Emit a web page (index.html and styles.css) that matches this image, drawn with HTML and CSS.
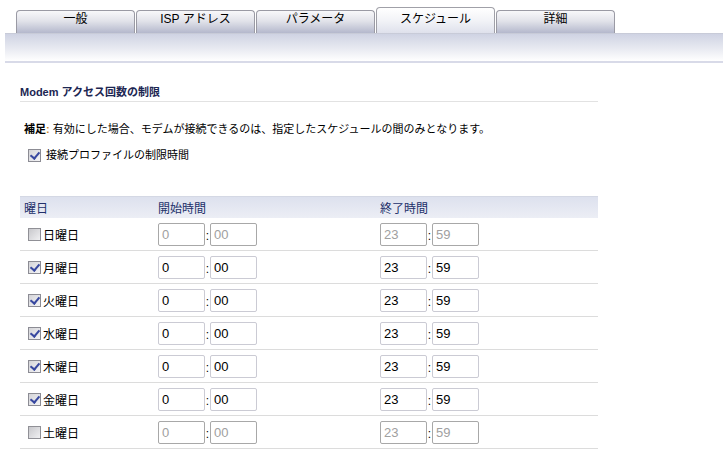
FILE: index.html
```html
<!DOCTYPE html>
<html lang="ja">
<head>
<meta charset="utf-8">
<link rel="stylesheet" href="styles.css">
</head>
<body>
<div class="tabs">
  <div class="tab">一般</div>
  <div class="tab">ISP アドレス</div>
  <div class="tab">パラメータ</div>
  <div class="tab active">スケジュール</div>
  <div class="tab">詳細</div>
</div>
<div class="bar"></div>
<div class="content">
  <h2 class="title">Modem アクセス回数の制限</h2>
  <p class="note"><b>補足<span class="colon">:</span></b> 有効にした場合、モデムが接続できるのは、指定したスケジュールの間のみとなります。</p>
  <label class="opt"><span class="cb on"></span>接続プロファイルの制限時間</label>

  <div class="table">
    <div class="row head">
      <div>曜日</div><div>開始時間</div><div>終了時間</div>
    </div>
    <div class="row off">
      <div class="day"><span class="cb"></span>日曜日</div>
      <div class="time"><span class="inp">0</span><span class="sep">:</span><span class="inp">00</span></div>
      <div class="time"><span class="inp">23</span><span class="sep">:</span><span class="inp">59</span></div>
    </div>
    <div class="row">
      <div class="day"><span class="cb on"></span>月曜日</div>
      <div class="time"><span class="inp">0</span><span class="sep">:</span><span class="inp">00</span></div>
      <div class="time"><span class="inp">23</span><span class="sep">:</span><span class="inp">59</span></div>
    </div>
    <div class="row">
      <div class="day"><span class="cb on"></span>火曜日</div>
      <div class="time"><span class="inp">0</span><span class="sep">:</span><span class="inp">00</span></div>
      <div class="time"><span class="inp">23</span><span class="sep">:</span><span class="inp">59</span></div>
    </div>
    <div class="row">
      <div class="day"><span class="cb on"></span>水曜日</div>
      <div class="time"><span class="inp">0</span><span class="sep">:</span><span class="inp">00</span></div>
      <div class="time"><span class="inp">23</span><span class="sep">:</span><span class="inp">59</span></div>
    </div>
    <div class="row">
      <div class="day"><span class="cb on"></span>木曜日</div>
      <div class="time"><span class="inp">0</span><span class="sep">:</span><span class="inp">00</span></div>
      <div class="time"><span class="inp">23</span><span class="sep">:</span><span class="inp">59</span></div>
    </div>
    <div class="row">
      <div class="day"><span class="cb on"></span>金曜日</div>
      <div class="time"><span class="inp">0</span><span class="sep">:</span><span class="inp">00</span></div>
      <div class="time"><span class="inp">23</span><span class="sep">:</span><span class="inp">59</span></div>
    </div>
    <div class="row off">
      <div class="day"><span class="cb"></span>土曜日</div>
      <div class="time"><span class="inp">0</span><span class="sep">:</span><span class="inp">00</span></div>
      <div class="time"><span class="inp">23</span><span class="sep">:</span><span class="inp">59</span></div>
    </div>
  </div>
</div>
</body>
</html>
```

FILE: styles.css
```css
* { box-sizing: border-box; }
html, body { margin: 0; padding: 0; background: #fff; }
body {
  font-family: "Liberation Sans", "Noto Sans CJK JP", sans-serif;
  font-size: 12px;
  color: #000;
  width: 728px;
  height: 468px;
  overflow: hidden;
}
.tabs {
  display: flex;
  align-items: flex-end;
  gap: 1px;
  padding-left: 16px;
  height: 33px;
}
.tab {
  width: 119px;
  height: 23px;
  border: 1px solid #9a9aa4;
  border-bottom: none;
  border-radius: 4px 4px 0 0;
  background: linear-gradient(#f8f8fa, #e2e3ea 45%, #b4b8cc);
  text-align: center;
  line-height: 17px;
  font-size: 12px;
  color: #000;
}
.tab.active {
  height: 26px;
  background: linear-gradient(#ffffff, #f2f3f7 50%, #dfe1ec);
  line-height: 22px;
  border-color: #a0a0a8;
}
.bar {
  margin: 0 5px;
  height: 30px;
  background: linear-gradient(#cfd3e3, #e6e8f0 50%, #ffffff);
  border-top: 1px solid #c8cbd8;
  border-bottom: 2px solid #d8dae8;
}
.content {
  padding-left: 20px;
  width: 598px;
}
.title {
  margin: 21px 0 0;
  font-size: 11px;
  font-weight: bold;
  color: #1c2652;
  height: 18px;
  line-height: 16px;
  border-bottom: 1px solid #e2e2e2;
}
.note {
  margin: 19px 0 0 4px;
  font-size: 11px;
  line-height: 16px;
}
.note b { font-weight: bold; }
.colon { color: #d08a2a; }
.opt {
  display: flex;
  align-items: center;
  margin: 10px 0 0 8px;
  font-size: 11px;
  line-height: 16px;
  gap: 5px;
}
.cb {
  display: inline-block;
  width: 13px;
  height: 13px;
  border: 1px solid #8c8c94;
  background: linear-gradient(135deg, #d4d4d8, #f4f4f6);
  flex: none;
  position: relative;
}
.cb.on::after {
  content: "";
  position: absolute;
  left: 3px;
  top: 0px;
  width: 4px;
  height: 7px;
  border: solid #3848a0;
  border-width: 0 2px 2px 0;
  transform: rotate(40deg);
}
.table {
  margin-top: 33px;
}
.row {
  display: grid;
  grid-template-columns: 138px 222px 1fr;
  height: 33px;
  align-items: center;
  border-bottom: 1px solid #dcdcdc;
}
.row.head {
  height: 22px;
  background: linear-gradient(#dde1ee, #eceef5);
  border-top: 1px solid #d4d8e4;
  border-bottom: none;
  color: #22306a;
}
.row.head div:first-child { padding-left: 4px; }
.day {
  display: flex;
  align-items: center;
  gap: 2px;
  padding-left: 8px;
}
.time {
  display: flex;
  align-items: center;
}
.inp {
  display: inline-block;
  width: 47px;
  height: 23px;
  border: 1px solid #cbcbd4;
  border-radius: 2px;
  padding-left: 3px;
  line-height: 21px;
  font-family: "Liberation Sans", Arial, sans-serif;
  font-size: 13px;
  color: #000;
}
.sep {
  width: 5px;
  text-align: center;
  font-size: 12px;
  line-height: 24px;
  margin-top: 4px;
}
.off .inp { border-color: #a8a8a8; color: #a0a0a0; }
.off .cb { background: linear-gradient(135deg, #c8c8cc, #f0f0f2); border-color: #909096; }
```
